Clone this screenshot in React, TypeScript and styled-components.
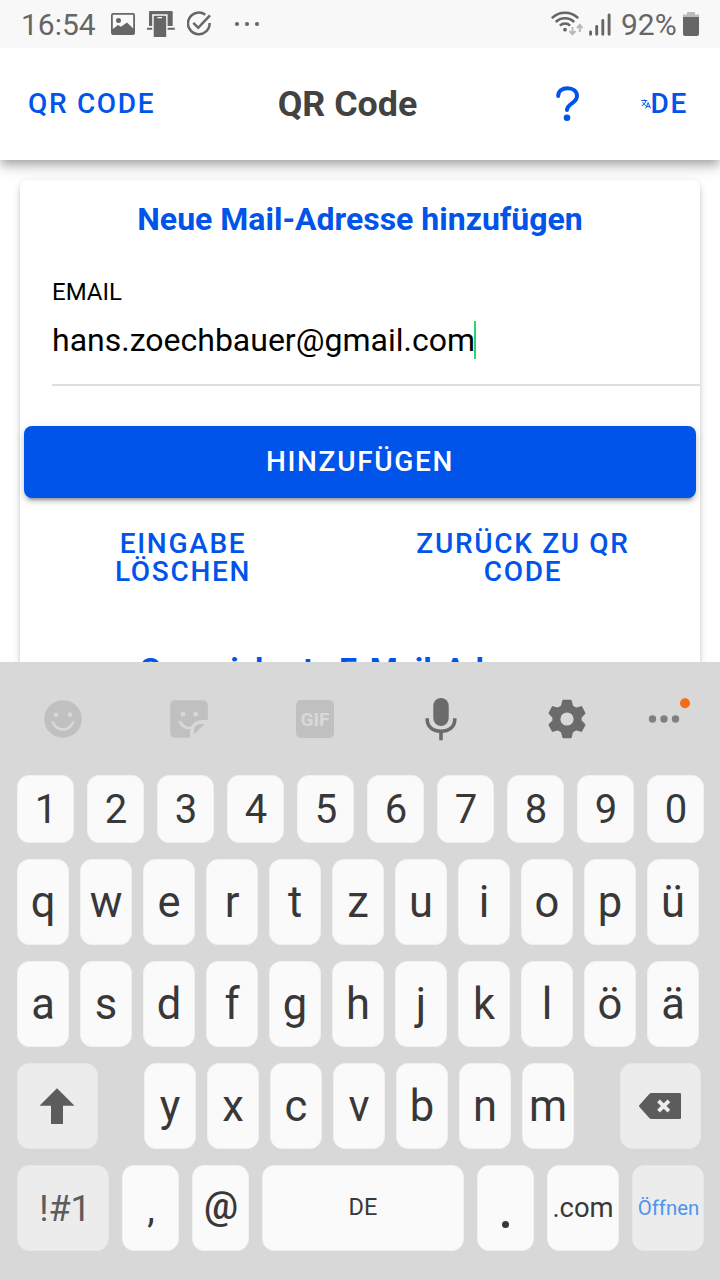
import React from "react";
import styled, { createGlobalStyle } from "styled-components";

const BLUE = "#0054e9";

const GlobalStyle = createGlobalStyle`
  *, *::before, *::after { box-sizing: border-box; }
  body { margin: 0; background: #fff; font-family: Roboto, sans-serif; overflow: hidden; }
  button { font: inherit; border: 0; background: none; padding: 0; margin: 0; color: inherit; }
  svg { display: block; flex: none; }
`;

const Screen = styled.div`
  width: 720px;
  height: 1280px;
  display: flex;
  flex-direction: column;
  overflow: hidden;
  background: #fff;
`;

const StatusBar = styled.header`
  height: 48px;
  flex: none;
  display: flex;
  align-items: center;
  background: #f8f8f8;
  color: #666;
  padding: 0 21px 0 21px;
  z-index: 3;
`;

const StatusText = styled.span<{ $width: number }>`
  width: ${(p) => p.$width}px;
  font-size: 30px;
  line-height: 48px;
  padding-top: 1px;
  white-space: nowrap;
`;

const Spacer = styled.div`
  flex: 1;
`;

const Toolbar = styled.nav`
  height: 112px;
  flex: none;
  display: grid;
  grid-template-columns: 250px 195px 1fr;
  align-items: center;
  background: #fff;
  box-shadow: 0 4px 8px -2px rgba(0, 0, 0, 0.2), 0 8px 10px rgba(0, 0, 0, 0.14),
    0 2px 20px rgba(0, 0, 0, 0.12);
  z-index: 2;
`;

const ToolbarButton = styled.button`
  display: flex;
  align-items: center;
  color: ${BLUE};
  font-size: 28px;
  font-weight: 500;
  line-height: 32px;
  letter-spacing: 1.68px;
`;

const BackButton = styled(ToolbarButton)`
  padding-left: 28px;
`;

const PageTitle = styled.h1`
  margin: 0;
  text-align: center;
  font-size: 35.8px;
  line-height: 40px;
  font-weight: 700;
  color: #424242;
`;

const ToolbarActions = styled.div`
  display: flex;
  align-items: center;
  justify-content: space-between;
  padding: 0 32px 0 111px;
`;

const Content = styled.main`
  height: 502px;
  flex: none;
  overflow: hidden;
  padding: 20px 20px 0;
`;

const Card = styled.section`
  height: 560px;
  border-radius: 8px;
  background: #fff;
  box-shadow: 0 6px 2px -4px rgba(0, 0, 0, 0.2), 0 4px 4px rgba(0, 0, 0, 0.14),
    0 2px 10px rgba(0, 0, 0, 0.12);
  display: flex;
  flex-direction: column;
`;

const CardHeading = styled.h2`
  margin: 0;
  font-size: 32px;
  line-height: 38px;
  font-weight: 700;
  text-align: center;
  color: ${BLUE};
`;

const FormHeading = styled(CardHeading)`
  padding-top: 20px;
`;

const SavedHeading = styled(CardHeading)`
  margin-top: 64px;
`;

const Field = styled.label`
  display: flex;
  flex-direction: column;
  margin: 38px 0 0 32px;
  height: 110px;
  border-bottom: 2px solid #dedede;
  color: #000;
`;

const FieldLabel = styled.span`
  font-size: 24px;
  line-height: 32px;
`;

const FieldValue = styled.span`
  display: flex;
  align-items: center;
  height: 38px;
  margin-top: 13px;
  font-size: 32px;
  line-height: 38px;
`;

const Caret = styled.i`
  width: 2px;
  height: 38px;
  margin-left: -1px;
  background: #2dd36f;
`;

const SubmitButton = styled.button`
  height: 72px;
  flex: none;
  margin: 40px 4px 0;
  border-radius: 8px;
  background: ${BLUE};
  color: #fff;
  font-size: 28px;
  font-weight: 500;
  letter-spacing: 1.68px;
  padding-bottom: 2px;
  box-shadow: 0 6px 2px -4px rgba(0, 0, 0, 0.2), 0 4px 4px rgba(0, 0, 0, 0.14),
    0 2px 10px rgba(0, 0, 0, 0.12);
`;

const SecondaryActions = styled.div`
  display: grid;
  grid-template-columns: 1fr 1fr;
  margin-top: 32px;
`;

const TextButton = styled.button`
  color: ${BLUE};
  font-size: 28px;
  font-weight: 500;
  line-height: 28px;
  letter-spacing: 1.68px;
  text-align: center;
  padding-right: 14px;
`;

const Keyboard = styled.section`
  flex: 1;
  display: flex;
  flex-direction: column;
  background: #d8d8d8;
  z-index: 2;
`;

const KeyboardTools = styled.div`
  height: 113px;
  flex: none;
  display: grid;
  grid-template-columns: repeat(5, 126px) 78px;
`;

const Tool = styled.button`
  display: flex;
  align-items: center;
  justify-content: center;
`;

const KeyRow = styled.div<{ $height: number; $gap: number }>`
  display: flex;
  flex: none;
  height: ${(p) => p.$height}px;
  gap: ${(p) => p.$gap}px;
  margin: 0 0 16px 17px;
`;

const Key = styled.button<{
  $width: number;
  $size?: number;
  $weight?: number;
  $muted?: boolean;
  $color?: string;
  $before?: number;
  $pad?: string;
}>`
  width: ${(p) => p.$width}px;
  flex: none;
  display: flex;
  align-items: center;
  justify-content: center;
  margin-left: ${(p) => p.$before ?? 0}px;
  padding: ${(p) => p.$pad ?? "2px 0 0"};
  border-radius: 12px;
  border: 1px solid ${(p) => (p.$muted ? "#e6e6e6" : "#f1f1f1")};
  background: ${(p) => (p.$muted ? "#ececec" : "#fafafa")};
  color: ${(p) => p.$color ?? "#383838"};
  font-size: ${(p) => p.$size ?? 43.5}px;
  font-weight: ${(p) => p.$weight ?? 400};
  line-height: 1;
  white-space: nowrap;
`;

const PictureIcon = () => (
  <svg width="24" height="22" viewBox="0 0 24 22">
    <path fill="#666" fillRule="evenodd" d="M2 0h20a2 2 0 0 1 2 2v18a2 2 0 0 1-2 2H2a2 2 0 0 1-2-2V2a2 2 0 0 1 2-2ZM1.800 1.800V16L7 12l3 1.800L16 9.500l6.200 6V1.800ZM7.500 5a2.500 2.500 0 1 1 0 5a2.500 2.500 0 0 1 0-5Z" />
  </svg>
);

const PhoneLinkIcon = () => (
  <svg width="28" height="26" viewBox="0 0 28 26" fill="#666">
    <path d="M3 0h21.700a1 1 0 0 1 1 1v14h-5.100V3.300H5.200V15H2V1a1 1 0 0 1 1-1ZM0 16.700h5.200v2H0ZM20.600 16.700h7.200v2h-7.200Z" />
    <path fillRule="evenodd" d="M7.700 4.700h10.500a1 1 0 0 1 1 1V26H6.700V5.700a1 1 0 0 1 1-1ZM10.500 6v1.200h4.500V6Z" />
  </svg>
);

const CheckIcon = () => (
  <svg width="26" height="26" viewBox="0 0 26 26" fill="none" stroke="#666" strokeWidth="2.500">
    <path d="M18.300 3.800A10.800 10.800 0 1 0 22.600 12M6.300 11.800l4.900 5L23 4.300" />
  </svg>
);

const MoreNotificationsIcon = () => (
  <svg width="26" height="6" viewBox="0 0 26 6" fill="#666">
    <circle cx="3" cy="3" r="2.100" /><circle cx="13" cy="3" r="2.100" /><circle cx="23" cy="3" r="2.100" />
  </svg>
);

const WifiIcon = () => (
  <svg width="32" height="26" viewBox="0 0 32 26" fill="none" stroke="#666" strokeWidth="2.500">
    <path d="M.8 7.200a18.500 18.500 0 0 1 26.400 0M4.800 11a13 13 0 0 1 18.400 0M8.900 14.600a7.400 7.400 0 0 1 10.200 0" />
    <circle cx="14" cy="18.700" r="1.900" fill="#666" stroke="none" />
    <path stroke="#b9b9b9" strokeWidth="2" d="M21.500 16v7m-3-3l3 3.200l3-3.200M28.800 21v-7m-2.800 3l2.800-3l2.800 3" />
  </svg>
);

const SignalIcon = () => (
  <svg width="22" height="24" viewBox="0 0 22 24" stroke="#666" strokeWidth="2.900" strokeLinecap="round">
    <path d="M1.600 20v2.300M7.700 14.500v7.800M13.800 8.500v13.800M20.100 3v19.300" />
  </svg>
);

const BatteryIcon = () => (
  <svg width="16" height="24" viewBox="0 0 16 24">
    <path fill="#bcbcbc" d="M4 0h8v2.500h4V6H0V2.500h4Z" />
    <path fill="#666" d="M0 5h16v17a2 2 0 0 1-2 2H2a2 2 0 0 1-2-2Z" />
  </svg>
);

const HelpIcon = () => (
  <svg width="24" height="36" viewBox="0 0 24 36">
    <path fill="none" stroke={BLUE} strokeWidth="4" strokeLinecap="round" d="M2.200 10C2.200 5 6 2.300 11.500 2.300S21 5.300 21 10c0 7.500-9.800 7-10 14" />
    <circle cx="11" cy="31.800" r="3.300" fill={BLUE} />
  </svg>
);

const HelpButton = styled(ToolbarButton)`
  padding-bottom: 1px;
`;

const TranslateIcon = () => (
  <svg width="10" height="10" viewBox="0 0 10 10" fill="none" stroke={BLUE} strokeWidth="1">
    <path d="M.3 1.600h6M3.300.4v1.200M5 1.600C4.300 4 2.800 5.800.6 6.900M1.700 3.200c.8 1.700 1.900 2.800 3.200 3.500M4.800 9.400L7.100 3.700l2.400 5.700M5.500 7.600h3.300" />
  </svg>
);

const SmileyIcon = () => (
  <svg width="38" height="38" viewBox="0 0 38 38">
    <circle cx="19" cy="19" r="18.800" fill="#c0c0c0" />
    <circle cx="12" cy="14.700" r="2.300" fill="#d8d8d8" /><circle cx="26" cy="14.700" r="2.300" fill="#d8d8d8" />
    <path d="M9 22.500c4.300 9.200 15.700 9.200 20 0" fill="none" stroke="#d8d8d8" strokeWidth="2.800" strokeLinecap="round" />
  </svg>
);

const StickerIcon = () => (
  <svg width="38" height="38" viewBox="0 0 38 38">
    <path fill="#c0c0c0" d="M5 .3h28A4.800 4.800 0 0 1 37.800 5v15H33c-8 0-13 5-13 13v4.700H5A4.800 4.800 0 0 1 .2 33V5A4.800 4.800 0 0 1 5 .3ZM34.500 24L24 34.500V31c0-4.500 2.500-7 7-7Z" />
    <circle cx="13" cy="14.200" r="2.400" fill="#d8d8d8" /><circle cx="25.700" cy="14.200" r="2.400" fill="#d8d8d8" />
    <path d="M10 22.300c2.800 5 8.500 7.100 13 5" fill="none" stroke="#d8d8d8" strokeWidth="2.800" strokeLinecap="round" />
  </svg>
);

const GifBadge = styled.span`
  width: 38px;
  height: 38px;
  border-radius: 5px;
  background: #c0c0c0;
  color: #d8d8d8;
  font-size: 19px;
  font-weight: 800;
  line-height: 39px;
  text-align: center;
`;

const MicIcon = () => (
  <svg width="32" height="44" viewBox="0 0 32 44">
    <rect x="8.300" y="1" width="15.400" height="28" rx="7.700" fill="#6b6b6b" />
    <path fill="none" stroke="#6b6b6b" strokeWidth="3.600" d="M2.200 21.300v1C2.200 30 8 34.400 16 34.400S29.800 30 29.800 22.300v-1M16 34v9.300" />
  </svg>
);

const GearIcon = () => (
  <svg width="38" height="40" viewBox="0 0 38 40">
    <path fill="#6b6b6b" stroke="#6b6b6b" strokeWidth="2" strokeLinejoin="round" fillRule="evenodd" d="M15.300 1.800h7.400l1.500 5.600l3.800 2.200l5.300-1.500l3.200 6l-3.900 4.200v3.400l3.900 4.200l-3.200 6l-5.300-1.500l-3.800 2.200l-1.500 5.600h-7.400l-1.500-5.600l-3.800-2.200l-5.300 1.500l-3.200-6l3.900-4.200v-3.400l-3.900-4.200l3.200-6l5.300 1.500l3.800-2.200ZM19 12.400a7.600 7.600 0 1 0 0 15.200a7.600 7.600 0 1 0 0-15.200Z" />
  </svg>
);

const MoreIcon = () => (
  <svg width="44" height="42" viewBox="0 -1 44 42">
    <g fill="#808080"><circle cx="5.500" cy="20" r="3.700" /><circle cx="17" cy="20" r="3.700" /><circle cx="28.500" cy="20" r="3.700" /></g>
    <circle cx="38" cy="4.300" r="5" fill="#f46d12" />
  </svg>
);

const ShiftIcon = () => (
  <svg width="36" height="36" viewBox="0 0 36 36">
    <path fill="#5c5c5c" d="M18 .3L35.500 17.700H24V36H12V17.700H.5Z" />
  </svg>
);

const BackspaceIcon = () => (
  <svg width="42" height="26" viewBox="0 0 42 26">
    <path fill="#5c5c5c" d="M12.500 0H41a1 1 0 0 1 1 1v24a1 1 0 0 1-1 1H12.500a3 3 0 0 1-2-.8L.5 14q-1-1 0-2L10.500.8A3 3 0 0 1 12.500 0Z" />
    <path d="M19.500 7.800l10.400 10.400M29.900 7.800L19.500 18.200" stroke="#ececec" strokeWidth="3.800" />
  </svg>
);

const DotMark = styled.i`
  width: 7px;
  height: 7px;
  border-radius: 50%;
  background: #383838;
`;

const StatusIcons = styled.div`
  display: flex;
  align-items: center;
  gap: 12px;
`;

const StatusReadings = styled.div`
  display: flex;
  align-items: center;
  gap: 6px;
`;

const SignalSlot = styled.span`
  padding-right: 4px;
`;

const NotificationDots = styled.span`
  padding-left: 9px;
`;

export default function App() {
  return (
    <>
      <GlobalStyle />
      <Screen>
        <StatusBar>
          <StatusText $width={90}>16:54</StatusText>
          <StatusIcons>
            <PictureIcon />
            <PhoneLinkIcon />
            <CheckIcon />
            <NotificationDots><MoreNotificationsIcon /></NotificationDots>
          </StatusIcons>
          <Spacer />
          <StatusReadings>
            <WifiIcon />
            <SignalSlot><SignalIcon /></SignalSlot>
            <StatusText $width={56}>92%</StatusText>
            <BatteryIcon />
          </StatusReadings>
        </StatusBar>

        <Toolbar>
          <BackButton>QR CODE</BackButton>
          <PageTitle>QR Code</PageTitle>
          <ToolbarActions>
            <HelpButton aria-label="Hilfe"><HelpIcon /></HelpButton>
            <ToolbarButton><TranslateIcon />DE</ToolbarButton>
          </ToolbarActions>
        </Toolbar>

        <Content>
          <Card>
            <FormHeading>Neue Mail-Adresse hinzufügen</FormHeading>
            <Field>
              <FieldLabel>EMAIL</FieldLabel>
              <FieldValue>hans.zoechbauer@gmail.com<Caret /></FieldValue>
            </Field>
            <SubmitButton>HINZUFÜGEN</SubmitButton>
            <SecondaryActions>
              <TextButton>EINGABE<br />LÖSCHEN</TextButton>
              <TextButton>ZURÜCK ZU QR<br />CODE</TextButton>
            </SecondaryActions>
            <SavedHeading>Gespeicherte E-Mail-Adressen</SavedHeading>
          </Card>
        </Content>

        <Keyboard>
          <KeyboardTools>
            <Tool><SmileyIcon /></Tool>
            <Tool><StickerIcon /></Tool>
            <Tool><GifBadge>GIF</GifBadge></Tool>
            <Tool><MicIcon /></Tool>
            <Tool><GearIcon /></Tool>
            <Tool><MoreIcon /></Tool>
          </KeyboardTools>
          <KeyRow $height={68} $gap={13}>
            {[..."1234567890"].map((k) => (
              <Key key={k} $width={57} $size={40} $pad="2px 0 0 1px">{k}</Key>
            ))}
          </KeyRow>
          {["qwertzuiopü", "asdfghjklöä"].map((row) => (
            <KeyRow key={row} $height={86} $gap={11}>
              {[...row].map((k) => <Key key={k} $width={52}>{k}</Key>)}
            </KeyRow>
          ))}
          <KeyRow $height={86} $gap={11}>
            <Key $width={81} $pad="0 2px 0 0" $muted><ShiftIcon /></Key>
            {[..."yxcvbnm"].map((k, i) => (
              <Key key={k} $width={52} $before={i === 0 ? 35 : 0}>{k}</Key>
            ))}
            <Key $width={81} $before={35} $pad="0 2px 0 0" $muted><BackspaceIcon /></Key>
          </KeyRow>
          <KeyRow $height={86} $gap={13}>
            <Key $width={92} $size={36} $pad="2px 0 0 4px" $muted $color="#5c5c5c">!#1</Key>
            <Key $width={57} $size={38} $pad="2px 0 0 1px">,</Key>
            <Key $width={57} $size={38} $weight={500} $pad="0 0 4px 1px">@</Key>
            <Key $width={202} $size={23.5} $pad="0">DE</Key>
            <Key $width={57} $pad="32px 0 0"><DotMark /></Key>
            <Key $width={72} $size={27.4}>.com</Key>
            <Key $width={72} $size={20.4} $pad="1px 0 0 1px" $muted $color="#4b94ee">Öffnen</Key>
          </KeyRow>
        </Keyboard>
      </Screen>
    </>
  );
}
